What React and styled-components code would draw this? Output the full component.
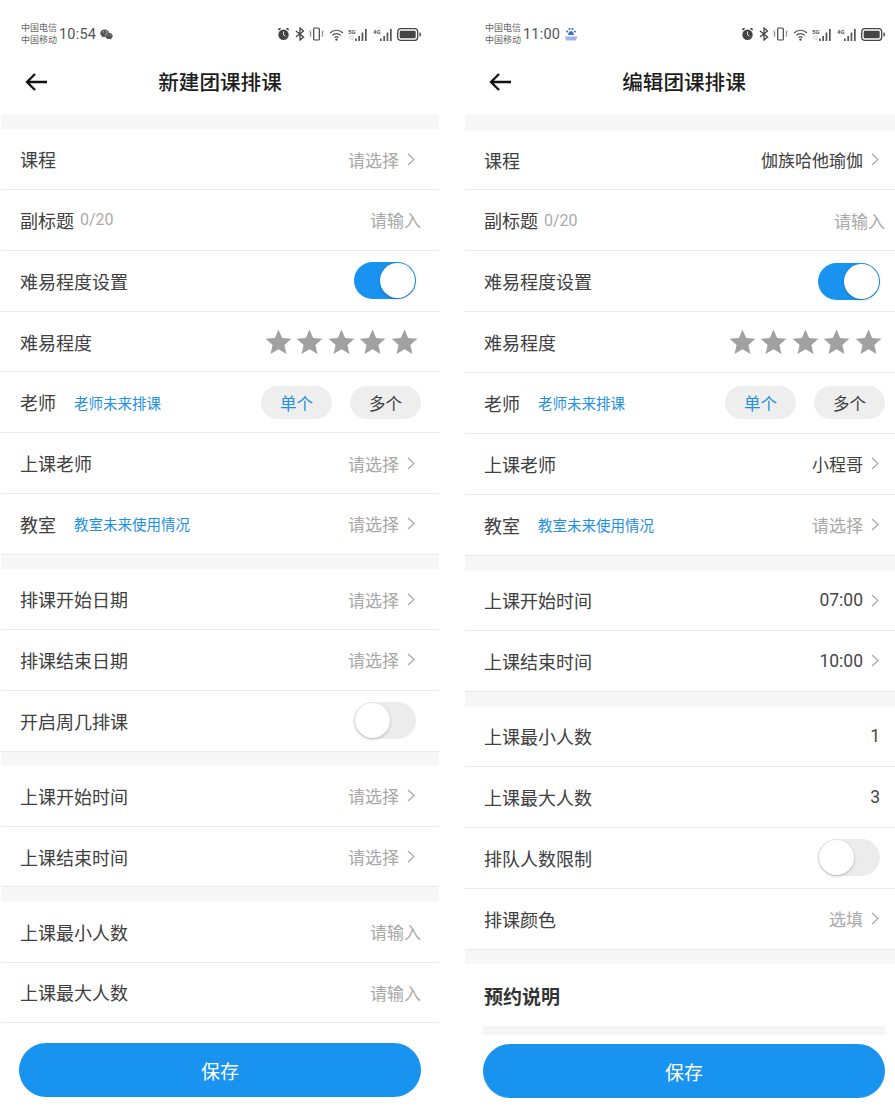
import React from "react";
import styled, { createGlobalStyle } from "styled-components";
import { FaWeixin } from "react-icons/fa";

const GlobalStyle = createGlobalStyle`
  html, body {
    margin: 0;
    padding: 0;
    background: #fff;
    overflow: hidden;
  }
  body {
    font-family: "Noto Sans CJK SC", "Noto Sans", sans-serif;
    color: #333;
  }
`;

const newForm = [
  [
    { label: "课程", kind: "select", value: "请选择" },
    { label: "副标题", hint: "0/20", kind: "input", value: "请输入" },
    { label: "难易程度设置", kind: "toggle", on: true },
    { label: "难易程度", kind: "stars" },
    { label: "老师", link: "老师未来排课", kind: "pills" },
    { label: "上课老师", kind: "select", value: "请选择" },
    { label: "教室", link: "教室未来使用情况", kind: "select", value: "请选择" },
  ],
  [
    { label: "排课开始日期", kind: "select", value: "请选择" },
    { label: "排课结束日期", kind: "select", value: "请选择" },
    { label: "开启周几排课", kind: "toggle" },
  ],
  [
    { label: "上课开始时间", kind: "select", value: "请选择" },
    { label: "上课结束时间", kind: "select", value: "请选择" },
  ],
  [
    { label: "上课最小人数", kind: "input", value: "请输入" },
    { label: "上课最大人数", kind: "input", value: "请输入" },
  ],
];

const editForm = [
  [
    { label: "课程", kind: "select", value: "伽族哈他瑜伽", filled: true },
    { label: "副标题", hint: "0/20", kind: "input", value: "请输入" },
    { label: "难易程度设置", kind: "toggle", on: true },
    { label: "难易程度", kind: "stars" },
    { label: "老师", link: "老师未来排课", kind: "pills" },
    { label: "上课老师", kind: "select", value: "小程哥", filled: true },
    { label: "教室", link: "教室未来使用情况", kind: "select", value: "请选择" },
  ],
  [
    { label: "上课开始时间", kind: "select", value: "07:00", numeric: true },
    { label: "上课结束时间", kind: "select", value: "10:00", numeric: true },
  ],
  [
    { label: "上课最小人数", kind: "number", value: "1" },
    { label: "上课最大人数", kind: "number", value: "3" },
    { label: "排队人数限制", kind: "toggle" },
    { label: "排课颜色", kind: "select", value: "选填" },
  ],
];

const Page = styled.div`
  display: flex;
  gap: 26px;
  width: 895px;
  height: 1113px;
  padding-left: 1px;
  box-sizing: border-box;
  overflow: hidden;
`;

const Panel = styled.div`
  --row-h: ${(p) => p.$rowHeight}px;
  --band-h: ${(p) => p.$bandHeight}px;
  flex: 0 0 438px;
  height: 1113px;
  display: flex;
  flex-direction: column;
`;

const StatusBar = styled.div`
  flex: none;
  height: 24px;
  margin-top: 22px;
  padding: 0 18px 0 20px;
  display: flex;
  align-items: center;
  color: #555;
`;

const Carrier = styled.div`
  font-size: 9px;
  line-height: 12.5px;
  width: 38px;
  color: #666;
  white-space: nowrap;
`;

const Time = styled.span`
  font-family: "Roboto", sans-serif;
  font-size: 14.5px;
  letter-spacing: 0.2px;
  color: #555;
  margin-right: 4px;
`;

const StatusIcons = styled.div`
  margin-left: auto;
  display: flex;
  align-items: center;
  gap: 4.5px;
`;

const Header = styled.div`
  flex: none;
  height: 68px;
  padding-top: 1px;
  display: flex;
  align-items: center;
  justify-content: center;
  position: relative;
`;

const BackButton = styled.svg`
  position: absolute;
  left: 23px;
  top: 26px;
`;

const Title = styled.div`
  font-size: 20.6px;
  font-weight: 500;
  color: #1c1c1c;
`;

const Scroll = styled.div`
  flex: 1;
  min-height: 0;
  overflow: hidden;
`;

const Band = styled.div`
  height: var(--band-h);
  background: #f7f7f7;
`;

const Row = styled.div`
  height: var(--row-h);
  box-sizing: border-box;
  border-bottom: 1px solid #ebebeb;
  padding: 0 18px 0 19px;
  display: flex;
  align-items: center;
`;

const Label = styled.span`
  font-size: 18px;
  color: #404040;
  white-space: nowrap;
`;

const Hint = styled.span`
  font-family: "Roboto", sans-serif;
  font-size: 16px;
  color: #ababab;
  margin-left: 6px;
`;

const LinkText = styled.span`
  font-size: 14.5px;
  color: #1d8fe6;
  margin-left: 18px;
`;

const Right = styled.div`
  margin-left: auto;
  display: flex;
  align-items: center;
  padding-right: ${(p) => p.$inset || 0}px;
`;

const Value = styled.span`
  font-size: 17px;
  color: ${(p) => (p.$filled ? "#404040" : "#a8a8a8")};
`;

const Numeric = styled.span`
  font-family: "Roboto", sans-serif;
  font-size: 17.5px;
  color: #484848;
`;

const Chevron = styled.svg`
  margin-left: 8px;
`;

const Track = styled.div`
  width: 62px;
  height: 37px;
  box-sizing: border-box;
  border-radius: 19px;
  padding: 1px;
  display: flex;
  justify-content: ${(p) => (p.$on ? "flex-end" : "flex-start")};
  background: ${(p) => (p.$on ? "#1894f0" : "#ececec")};
`;

const Knob = styled.div`
  width: 35px;
  height: 35px;
  border-radius: 50%;
  background: #fff;
  box-shadow: 0 1px 3px rgba(0, 0, 0, 0.25);
`;

const Stars = styled.div`
  display: flex;
  gap: 4.6px;
  margin-right: 3px;
`;

const Pills = styled.div`
  display: flex;
  gap: 18px;
`;

const Pill = styled.div`
  width: 71px;
  height: 33px;
  border-radius: 17px;
  background: #eeeeee;
  font-size: 16.5px;
  line-height: 34px;
  text-align: center;
  color: ${(p) => (p.$active ? "#1d8fe6" : "#404040")};
`;

const NoteTitle = styled.div`
  height: 62px;
  padding-left: 19px;
  display: flex;
  align-items: center;
  font-size: 19px;
  font-weight: 700;
  color: #333;
`;

const NoteBox = styled.div`
  height: 120px;
  margin: 0 18px;
  background: #f5f5f5;
`;

const Footer = styled.div`
  flex: none;
  height: 78px;
  box-sizing: border-box;
  padding: ${(p) => p.$top}px 18px 0;
`;

const SaveButton = styled.button`
  display: block;
  width: 100%;
  height: 54px;
  border: 0;
  padding: 0;
  border-radius: 27px;
  background: #1894f0;
  color: #fff;
  font-family: inherit;
  font-size: 19px;
`;

const ChevronIcon = () => (
  <Chevron width="8" height="13" viewBox="0 0 8 13" fill="none">
    <path d="M1 1l6 5.500-6 5.500" stroke="#a8a8a8" strokeWidth="1.200" />
  </Chevron>
);

const StarIcon = () => (
  <svg width="27" height="26" viewBox="0 0 27 26">
    <path
      d="M13.500 0.500l3.600 8.500 9.300.8-7 6.100 2.100 9.100-8-4.800-8 4.800 2.100-9.100-7-6.100 9.300-.8z"
      fill="#a1a1a1"
    />
  </svg>
);

const SignalIcon = ({ tag, sub }) => (
  <svg width="20" height="13" viewBox="0 0 20 13">
    <text x="0" y="5.500" fontSize="6" fontWeight="700" fontFamily="Roboto" fill="#555">
      {tag}
    </text>
    {sub && (
      <text x="0" y="12" fontSize="4.500" fontFamily="Roboto" fill="#bbb">
        {sub}
      </text>
    )}
    <path d="M7 10.500h1.700V13H7zM10.300 8h1.700v5h-1.700zM13.600 4.500h1.700V13h-1.700zM17 1h1.700v12H17z" fill="#555" />
  </svg>
);

const SystemIcons = () => (
  <StatusIcons>
    <svg width="13" height="14" viewBox="0 0 13 14">
      <path d="M1 1.800l2.300-1 .6 1.200-2.400 1.700zM12 1.800l-2.300-1-.6 1.200 2.400 1.700z" fill="#444" />
      <circle cx="6.500" cy="7.800" r="5.200" fill="#444" />
      <path d="M6.500 4.500v3.500l2.200 1.300" stroke="#ddd" strokeWidth="1" fill="none" />
    </svg>
    <svg width="10" height="14" viewBox="0 0 10 14" fill="none">
      <path d="M1 4l7.500 6L5 13V1l3.500 3L1 10" stroke="#444" strokeWidth="1.300" />
    </svg>
    <svg width="15" height="14" viewBox="0 0 15 14" fill="none">
      <rect x="4.700" y="1" width="5.600" height="12" rx="1" stroke="#444" strokeWidth="1.200" />
      <path d="M2 3.500l-1 1.200 1 1.300-1 1.300 1 1.300-1 1.200M13 3.500l1 1.200-1 1.300 1 1.300-1 1.300 1 1.200" stroke="#444" strokeWidth="0.800" />
    </svg>
    <svg width="15" height="13" viewBox="0 0 15 13" fill="none">
      <path d="M1 5a9 9 0 0 1 13 0M3.200 7.400a6 6 0 0 1 8.600 0M5.400 9.700a3 3 0 0 1 4.200 0" stroke="#555" strokeWidth="1.100" />
      <circle cx="7.500" cy="11.500" r="1.200" fill="#555" />
    </svg>
    <SignalIcon tag="5G" sub="1G" />
    <SignalIcon tag="4G" />
    <svg width="24" height="13" viewBox="0 0 24 13" fill="none">
      <rect x="0.700" y="0.700" width="20" height="11.600" rx="3" stroke="#444" strokeWidth="1.300" />
      <rect x="2.700" y="2.700" width="16" height="7.600" rx="1.400" fill="#444" />
      <rect x="22.400" y="4.500" width="1.400" height="4" rx="0.700" fill="#444" />
    </svg>
  </StatusIcons>
);

const BaiduIcon = () => (
  <svg width="14" height="14" viewBox="0 0 14 14">
    <circle cx="3.200" cy="4.500" r="1.100" fill="#3d6fd8" />
    <circle cx="5.500" cy="2" r="1.100" fill="#3d6fd8" />
    <circle cx="8.500" cy="2" r="1.100" fill="#3d6fd8" />
    <circle cx="10.800" cy="4.500" r="1.100" fill="#3d6fd8" />
    <path d="M7 4c-1.800 0-2.700 2.300-3 4h6c-.3-1.700-1.200-4-3-4z" fill="#3d6fd8" />
    <path d="M0.500 9.500h13l-1.800 4H2.300z" fill="#9fb4ea" />
  </svg>
);

function FormRow({ row }) {
  let control = null;
  if (row.kind === "select") {
    control = (
      <Right $inset={6}>
        {row.numeric ? (
          <Numeric>{row.value}</Numeric>
        ) : (
          <Value $filled={row.filled}>{row.value}</Value>
        )}
        <ChevronIcon />
      </Right>
    );
  } else if (row.kind === "input") {
    control = (
      <Right>
        <Value>{row.value}</Value>
      </Right>
    );
  } else if (row.kind === "number") {
    control = (
      <Right $inset={5}>
        <Numeric>{row.value}</Numeric>
      </Right>
    );
  } else if (row.kind === "toggle") {
    control = (
      <Right $inset={5}>
        <Track $on={row.on}>
          <Knob />
        </Track>
      </Right>
    );
  } else if (row.kind === "stars") {
    control = (
      <Right>
        <Stars>
          {[0, 1, 2, 3, 4].map((i) => (
            <StarIcon key={i} />
          ))}
        </Stars>
      </Right>
    );
  } else if (row.kind === "pills") {
    control = (
      <Right>
        <Pills>
          <Pill $active>单个</Pill>
          <Pill>多个</Pill>
        </Pills>
      </Right>
    );
  }

  return (
    <Row>
      <Label>{row.label}</Label>
      {row.hint && <Hint>{row.hint}</Hint>}
      {row.link && <LinkText>{row.link}</LinkText>}
      {control}
    </Row>
  );
}

function Screen({ time, notifyIcon, title, groups, rowHeight, bandHeight, footerTop, children }) {
  return (
    <Panel $rowHeight={rowHeight} $bandHeight={bandHeight}>
      <StatusBar>
        <Carrier>
          中国电信
          <br />
          中国移动
        </Carrier>
        <Time>{time}</Time>
        {notifyIcon}
        <SystemIcons />
      </StatusBar>
      <Header>
        <BackButton width="24" height="20" viewBox="0 0 24 20" fill="none">
          <path d="M23 10H3M11 2l-8 8 8 8" stroke="#111" strokeWidth="2.300" />
        </BackButton>
        <Title>{title}</Title>
      </Header>
      <Scroll>
        {groups.map((group, i) => (
          <React.Fragment key={i}>
            <Band />
            {group.map((row) => (
              <FormRow key={row.label} row={row} />
            ))}
          </React.Fragment>
        ))}
        {children}
      </Scroll>
      <Footer $top={footerTop}>
        <SaveButton>保存</SaveButton>
      </Footer>
    </Panel>
  );
}

export default function App() {
  return (
    <>
      <GlobalStyle />
      <Page>
        <Screen
          time="10:54"
          notifyIcon={<FaWeixin size={13} color="#555" />}
          title="新建团课排课"
          groups={newForm}
          rowHeight={60.8}
          bandHeight={14.3}
          footerTop={8}
        />
        <Screen
          time="11:00"
          notifyIcon={<BaiduIcon />}
          title="编辑团课排课"
          groups={editForm}
          rowHeight={60.85}
          bandHeight={14.6}
          footerTop={9}
        >
          <Band />
          <NoteTitle>预约说明</NoteTitle>
          <NoteBox />
        </Screen>
      </Page>
    </>
  );
}
